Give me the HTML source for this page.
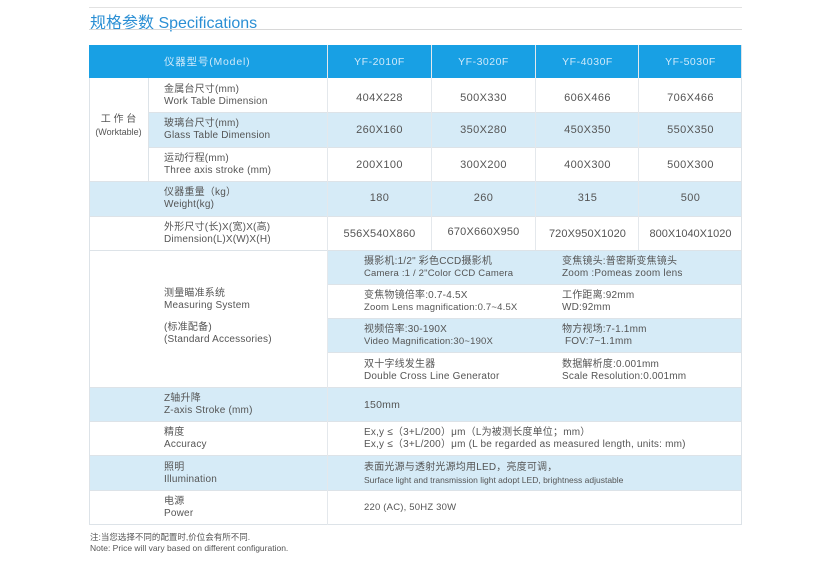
<!DOCTYPE html>
<html><head><meta charset="utf-8"><style>
*{margin:0;padding:0;box-sizing:border-box}
body{width:820px;height:577px;background:#fff;position:relative;overflow:hidden;font-family:"Liberation Sans","Noto Sans CJK SC",sans-serif;color:#555}
.a{position:absolute}
.bg{position:absolute;left:89px;width:653px}
.blue{background:#d6ebf7}
.hl{position:absolute;height:1px;background:#dde3e8}
.vl{position:absolute;width:1px;background:#dde3e8}
.c{position:absolute;text-align:center;font-size:11px;color:#555;white-space:nowrap;letter-spacing:0.4px}
.l{position:absolute;font-size:10px;line-height:12px;white-space:nowrap;color:#555;letter-spacing:0.2px}
.h{position:absolute;text-align:center;font-size:10.5px;color:#cfe9fa;white-space:nowrap;letter-spacing:0.5px}
</style></head><body>
<div class="a" style="left:89px;top:7px;width:653px;height:1px;background:#e2e2e2"></div>
<div class="a" style="left:90px;top:9px;font-size:16px;color:#2b8fd4;white-space:nowrap">规格参数 Specifications</div>
<div class="a" style="left:89px;top:29px;width:653px;height:1px;background:#d8d8d8"></div>

<div class="bg" style="top:45px;height:33px;background:#18a0e4"></div>
<div class="a blue" style="top:112px;height:35px;left:148px;width:594px"></div>
<div class="bg blue" style="top:181px;height:35px"></div>
<div class="a blue" style="left:328px;width:414px;top:250px;height:34px"></div>
<div class="a blue" style="left:328px;width:414px;top:318px;height:34px"></div>
<div class="bg blue" style="top:387px;height:34px"></div>
<div class="bg blue" style="top:455px;height:35px"></div>

<div class="hl" style="left:89px;width:653px;top:524px"></div>
<div class="hl" style="left:148px;width:594px;top:112px"></div>
<div class="hl" style="left:148px;width:594px;top:147px"></div>
<div class="hl" style="left:89px;width:653px;top:181px"></div>
<div class="hl" style="left:89px;width:653px;top:216px"></div>
<div class="hl" style="left:89px;width:653px;top:250px"></div>
<div class="hl" style="left:328px;width:414px;top:284px"></div>
<div class="hl" style="left:328px;width:414px;top:318px"></div>
<div class="hl" style="left:328px;width:414px;top:352px"></div>
<div class="hl" style="left:89px;width:653px;top:387px"></div>
<div class="hl" style="left:89px;width:653px;top:421px"></div>
<div class="hl" style="left:89px;width:653px;top:455px"></div>
<div class="hl" style="left:89px;width:653px;top:490px"></div>
<div class="vl" style="left:89px;top:78px;height:447px"></div>
<div class="vl" style="left:741px;top:45px;height:480px"></div>
<div class="vl" style="left:148px;top:78px;height:103px"></div>
<div class="vl" style="left:327px;top:45px;height:480px;background:#e4e8ec"></div>
<div class="vl" style="left:431px;top:45px;height:205px;background:#e4e8ec"></div>
<div class="vl" style="left:535px;top:45px;height:205px;background:#e4e8ec"></div>
<div class="vl" style="left:638px;top:45px;height:205px;background:#e4e8ec"></div>

<div class="l" style="left:164px;top:56px;font-size:10.5px;color:#cfe9fa;letter-spacing:0.8px">仪器型号(Model)</div>
<div class="h" style="left:328px;width:103px;top:56px">YF-2010F</div>
<div class="h" style="left:432px;width:103px;top:56px">YF-3020F</div>
<div class="h" style="left:536px;width:103px;top:56px">YF-4030F</div>
<div class="h" style="left:639px;width:103px;top:56px">YF-5030F</div>

<div class="c" style="left:89px;width:59px;top:114px;font-size:10px;line-height:12px;letter-spacing:0">工 作 台<br><span style="font-size:9px">(Worktable)</span></div>

<div class="l" style="left:164px;top:84px">金属台尺寸(mm)<br>Work Table Dimension</div>
<div class="l" style="left:164px;top:118px">玻璃台尺寸(mm)<br>Glass Table Dimension</div>
<div class="l" style="left:164px;top:153px">运动行程(mm)<br>Three axis stroke (mm)</div>
<div class="l" style="left:164px;top:187px">仪器重量（kg）<br>Weight(kg)</div>
<div class="l" style="left:164px;top:222px">外形尺寸(长)X(宽)X(高)<br>Dimension(L)X(W)X(H)</div>

<div class="c" style="left:328px;width:103px;top:92px">404X228</div>
<div class="c" style="left:432px;width:103px;top:92px">500X330</div>
<div class="c" style="left:536px;width:103px;top:92px">606X466</div>
<div class="c" style="left:639px;width:103px;top:92px">706X466</div>
<div class="c" style="left:328px;width:103px;top:124px">260X160</div>
<div class="c" style="left:432px;width:103px;top:124px">350X280</div>
<div class="c" style="left:536px;width:103px;top:124px">450X350</div>
<div class="c" style="left:639px;width:103px;top:124px">550X350</div>
<div class="c" style="left:328px;width:103px;top:159px">200X100</div>
<div class="c" style="left:432px;width:103px;top:159px">300X200</div>
<div class="c" style="left:536px;width:103px;top:159px">400X300</div>
<div class="c" style="left:639px;width:103px;top:159px">500X300</div>
<div class="c" style="left:328px;width:103px;top:192px">180</div>
<div class="c" style="left:432px;width:103px;top:192px">260</div>
<div class="c" style="left:536px;width:103px;top:192px">315</div>
<div class="c" style="left:639px;width:103px;top:192px">500</div>
<div class="c" style="left:328px;width:103px;top:228px;letter-spacing:0.2px">556X540X860</div>
<div class="c" style="left:432px;width:103px;top:226px;letter-spacing:0.2px">670X660X950</div>
<div class="c" style="left:536px;width:103px;top:228px;letter-spacing:0.1px">720X950X1020</div>
<div class="c" style="left:639px;width:103px;top:228px;letter-spacing:0">800X1040X1020</div>

<div class="l" style="left:164px;top:288px">测量瞄准系统<br>Measuring  System</div>
<div class="l" style="left:164px;top:322px">(标准配备)<br>(Standard Accessories)</div>

<div class="l" style="left:364px;top:256px">摄影机:1/2" 彩色CCD摄影机<br><span style="font-size:9.5px">Camera :1 / 2"Color CCD Camera</span></div>
<div class="l" style="left:562px;top:256px">变焦镜头:普密斯变焦镜头<br>Zoom :Pomeas zoom lens</div>
<div class="l" style="left:364px;top:290px">变焦物镜倍率:0.7-4.5X<br><span style="font-size:9.5px">Zoom Lens magnification:0.7~4.5X</span></div>
<div class="l" style="left:562px;top:290px">工作距离:92mm<br>WD:92mm</div>
<div class="l" style="left:364px;top:324px">视频倍率:30-190X<br><span style="font-size:9.5px">Video Magnification:30~190X</span></div>
<div class="l" style="left:562px;top:324px">物方视场:7-1.1mm<br>&nbsp;FOV:7~1.1mm</div>
<div class="l" style="left:364px;top:359px">双十字线发生器<br>Double Cross Line Generator</div>
<div class="l" style="left:562px;top:359px">数据解析度:0.001mm<br>Scale Resolution:0.001mm</div>

<div class="l" style="left:164px;top:393px">Z轴升降<br>Z-axis Stroke (mm)</div>
<div class="l" style="left:164px;top:427px">精度<br>Accuracy</div>
<div class="l" style="left:164px;top:462px">照明<br>Illumination</div>
<div class="l" style="left:164px;top:496px">电源<br>Power</div>

<div class="l" style="left:364px;top:399px;font-size:10.5px">150mm</div>
<div class="l" style="left:364px;top:427px">Ex,y ≤（3+L/200）μm（L为被测长度单位；mm）<br>Ex,y ≤（3+L/200）μm (L be regarded as measured length, units: mm)</div>
<div class="l" style="left:364px;top:462px">表面光源与透射光源均用LED，亮度可调，<br><span style="font-size:8.5px;letter-spacing:0">Surface light and transmission light adopt LED, brightness adjustable</span></div>
<div class="l" style="left:364px;top:502px;font-size:9.5px">220 (AC), 50HZ 30W</div>

<div class="l" style="left:90px;top:532px;font-size:8.5px;line-height:11px;letter-spacing:0">注:当您选择不同的配置时,价位会有所不同.<br>Note: Price will vary based on different configuration.</div>
</body></html>
